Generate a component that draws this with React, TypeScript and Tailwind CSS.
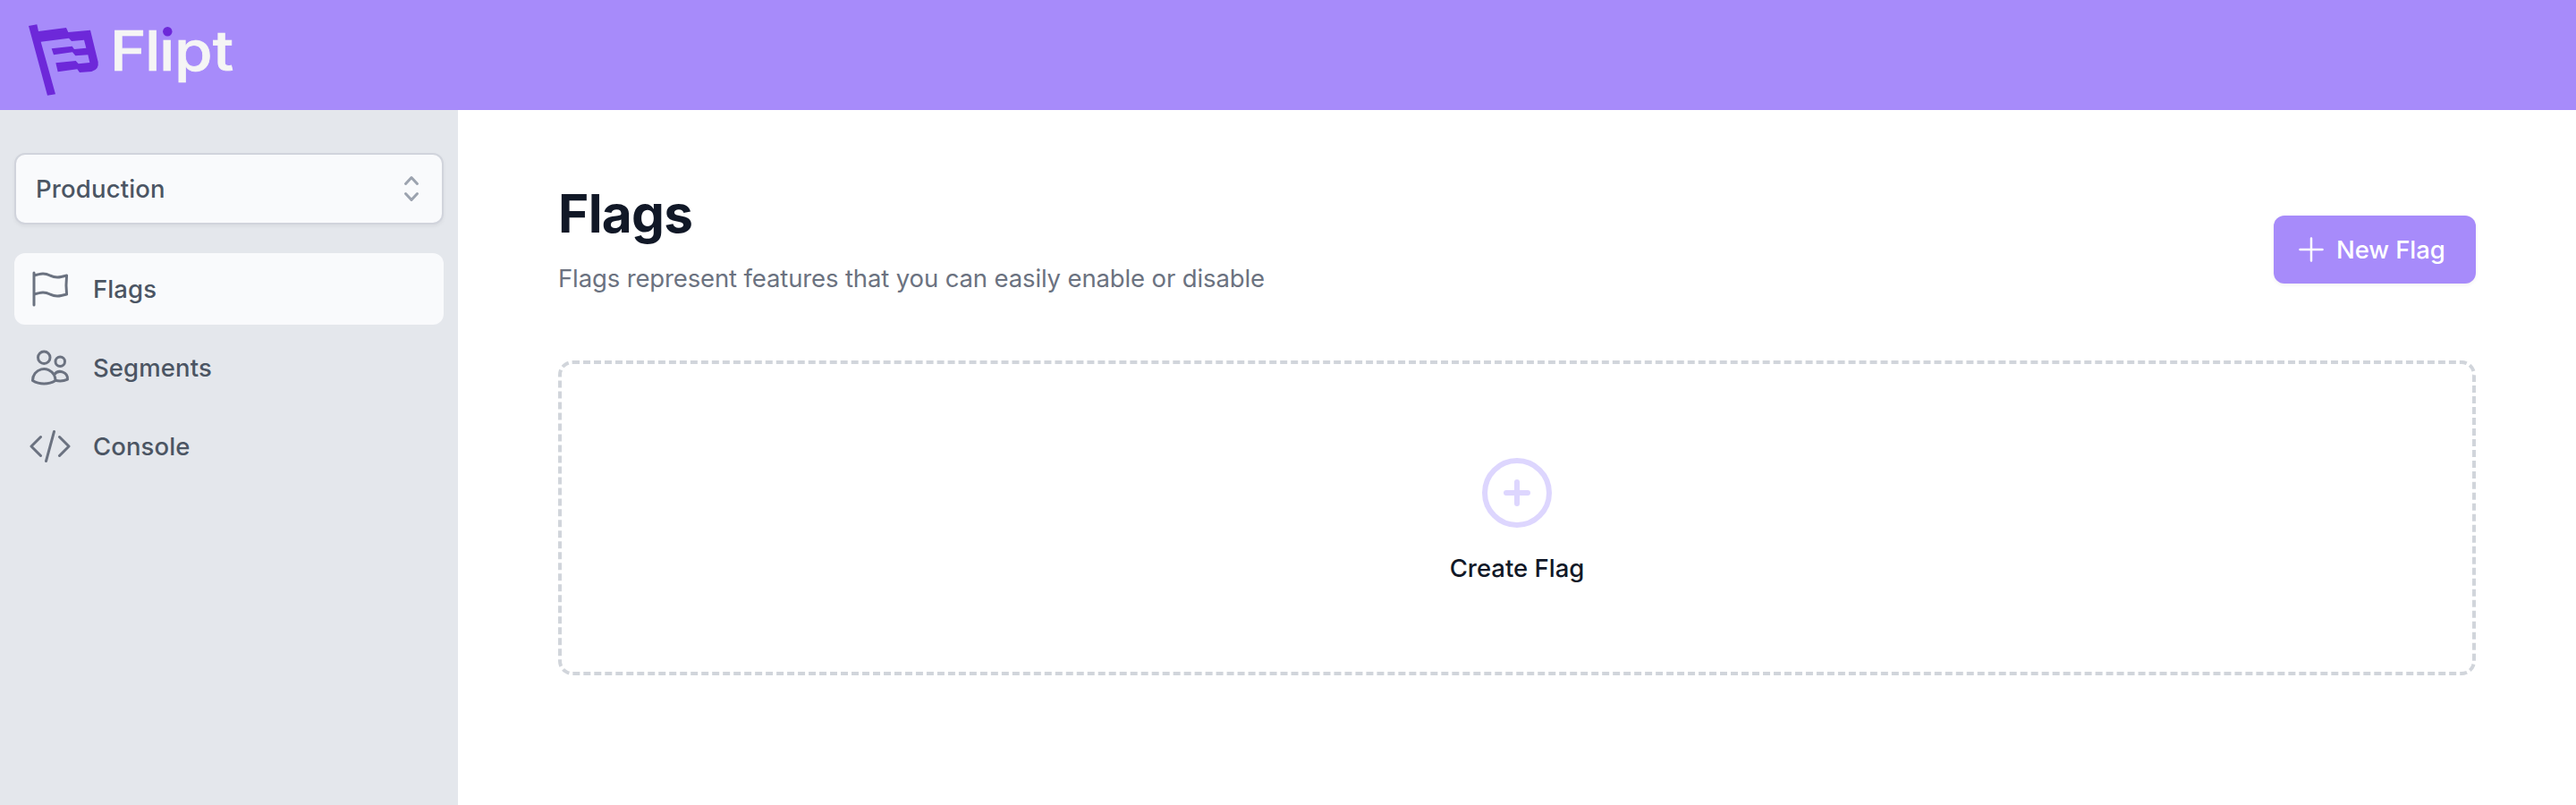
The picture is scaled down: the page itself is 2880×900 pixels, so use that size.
import type { ReactNode } from 'react';

function Outline({ className, children }: { className: string; children: ReactNode }) {
  return (
    <svg
      className={className}
      viewBox="0 0 24 24"
      fill="none"
      stroke="currentColor"
      strokeWidth={1.5}
      strokeLinecap="round"
      strokeLinejoin="round"
      aria-hidden="true"
    >
      {children}
    </svg>
  );
}

function Logo() {
  return (
    <svg className="h-[100px] w-[240px]" viewBox="30 20 240 100" aria-label="Flipt">
      <path
        transform="scale(0.33333)"
        fill="#6d28d9"
        d="M96 87 124 82 129 105 222 93 229 108 303 101 329 208Q333 234 307 240L267 243 259 232 194 241 187 211 254 204 263 214 301 210 295 184 253 187 243 175 180 184 173 163 242 155 249 165 289 161 282 134 240 138 231 128 137 140 186 316 159 320Z"
      />
      <text
        transform="scale(1.12 1)"
        x="109.8 144.6 158.9 174.2 212.3"
        y="78.8"
        fill="#f5f5f5"
        stroke="#f5f5f5"
        strokeWidth="0.7"
        className="font-['Inter',sans-serif] text-[61.5px] font-medium"
      >
        Flıpt
      </text>
      <circle cx="187.3" cy="35.3" r="5.2" fill="#6d28d9" />
    </svg>
  );
}

const navigation = [
  {
    name: 'Flags',
    active: true,
    icon: (
      <path d="M3 3v1.5M3 21v-6m0 0l2.77-.693a9 9 0 016.208.682l.108.054a9 9 0 006.086.71l3.114-.732a48.524 48.524 0 01-.005-10.499l-3.11.732a9 9 0 01-6.085-.711l-.108-.054a9 9 0 00-6.208-.682L3 4.5M3 15V4.5" />
    ),
  },
  {
    name: 'Segments',
    active: false,
    icon: (
      <path d="M15 19.128a9.38 9.38 0 002.625.372 9.337 9.337 0 004.121-.952 4.125 4.125 0 00-7.533-2.493M15 19.128v-.003c0-1.113-.285-2.16-.786-3.07M15 19.128v.106A12.318 12.318 0 018.624 21c-2.331 0-4.512-.645-6.374-1.766l-.001-.109a6.375 6.375 0 0111.964-3.07M12 6.375a3.375 3.375 0 11-6.75 0 3.375 3.375 0 016.75 0zm8.25 2.25a2.625 2.625 0 11-5.25 0 2.625 2.625 0 015.25 0z" />
    ),
  },
  {
    name: 'Console',
    active: false,
    icon: <path d="M17.25 6.75L22.5 12l-5.25 5.25m-10.5 0L1.5 12l5.25-5.25m7.5-3l-4.5 16.5" />,
  },
];

function Sidebar() {
  return (
    <aside className="flex w-[512px] shrink-0 flex-col bg-[#e4e7ec] px-4 pt-12">
      <button className="flex h-20 items-center justify-between rounded-xl border-2 border-[#d1d4dc] bg-[#f9fafc] pl-[22px] pr-3.5 text-[27.5px] leading-10 font-medium tracking-[0.15px] text-[#4b5563] shadow-[0_2px_4px_0_rgba(0,0,0,0.05)]">
        Production
        <svg className="size-10 text-[#9ca3af]" viewBox="0 0 20 20" fill="currentColor" aria-hidden="true">
          <path
            fillRule="evenodd"
            clipRule="evenodd"
            d="M10 3a.75.75 0 01.55.24l3.25 3.5a.75.75 0 11-1.1 1.02L10 4.852 7.3 7.76a.75.75 0 01-1.1-1.02l3.25-3.5A.75.75 0 0110 3zm-3.76 9.2a.75.75 0 011.06.04l2.7 2.908 2.7-2.908a.75.75 0 111.1 1.02l-3.25 3.5a.75.75 0 01-1.1 0l-3.25-3.5a.75.75 0 01.04-1.06z"
          />
        </svg>
      </button>
      <nav className="mt-8 flex flex-col gap-2">
        {navigation.map((item) => (
          <a
            key={item.name}
            className={`flex h-20 items-center rounded-xl px-4 text-[27.5px] leading-10 font-medium tracking-[0.1px] text-[#4b5563] ${item.active ? 'bg-[#f9fafc]' : ''}`}
          >
            <Outline className="mr-6 size-12 text-[#6b7280]">{item.icon}</Outline>
            {item.name}
          </a>
        ))}
      </nav>
    </aside>
  );
}

export default function App() {
  return (
    <div className="flex h-[900px] w-full flex-col overflow-hidden bg-white font-['Inter',sans-serif]">
      <header className="flex h-[123px] shrink-0 items-start bg-[#a78bfa] pt-5 pl-[30px]">
        <Logo />
      </header>
      <div className="flex flex-1">
        <Sidebar />
        <main className="flex-1 pt-20 pr-28 pl-28">
          <div className="flex items-center justify-between">
            <div>
              <h1 className="text-[58.5px] leading-[72px] font-bold tracking-[-0.7px] text-[#111827]">Flags</h1>
              <p className="mt-4 text-[27.5px] leading-10 tracking-[-0.13px] text-[#6b7280]">
                Flags represent features that you can easily enable or disable
              </p>
            </div>
            <button className="mt-6 flex h-[76px] w-[226px] items-center rounded-xl bg-[#a78bfa] pl-[22px] text-[27.5px] leading-10 font-medium tracking-[-0.1px] text-white shadow-[0_2px_4px_0_rgba(0,0,0,0.05)]">
              <Outline className="mr-2 size-10 shrink-0">
                <path d="M12 4.5v15m7.5-7.5h-15" />
              </Outline>
              <span className="whitespace-nowrap">New Flag</span>
            </button>
          </div>
          <button className="mt-[72px] flex h-[352px] w-full flex-col items-center rounded-2xl border-4 border-dashed border-[#d1d5db] pt-24">
            <Outline className="size-24 text-[#ddd6fe]">
              <path d="M12 9v6m3-3H9m12 0a9 9 0 11-18 0 9 9 0 0118 0z" />
            </Outline>
            <span className="mt-4 text-[27.5px] leading-10 font-medium text-[#111827]">Create Flag</span>
          </button>
        </main>
      </div>
    </div>
  );
}
